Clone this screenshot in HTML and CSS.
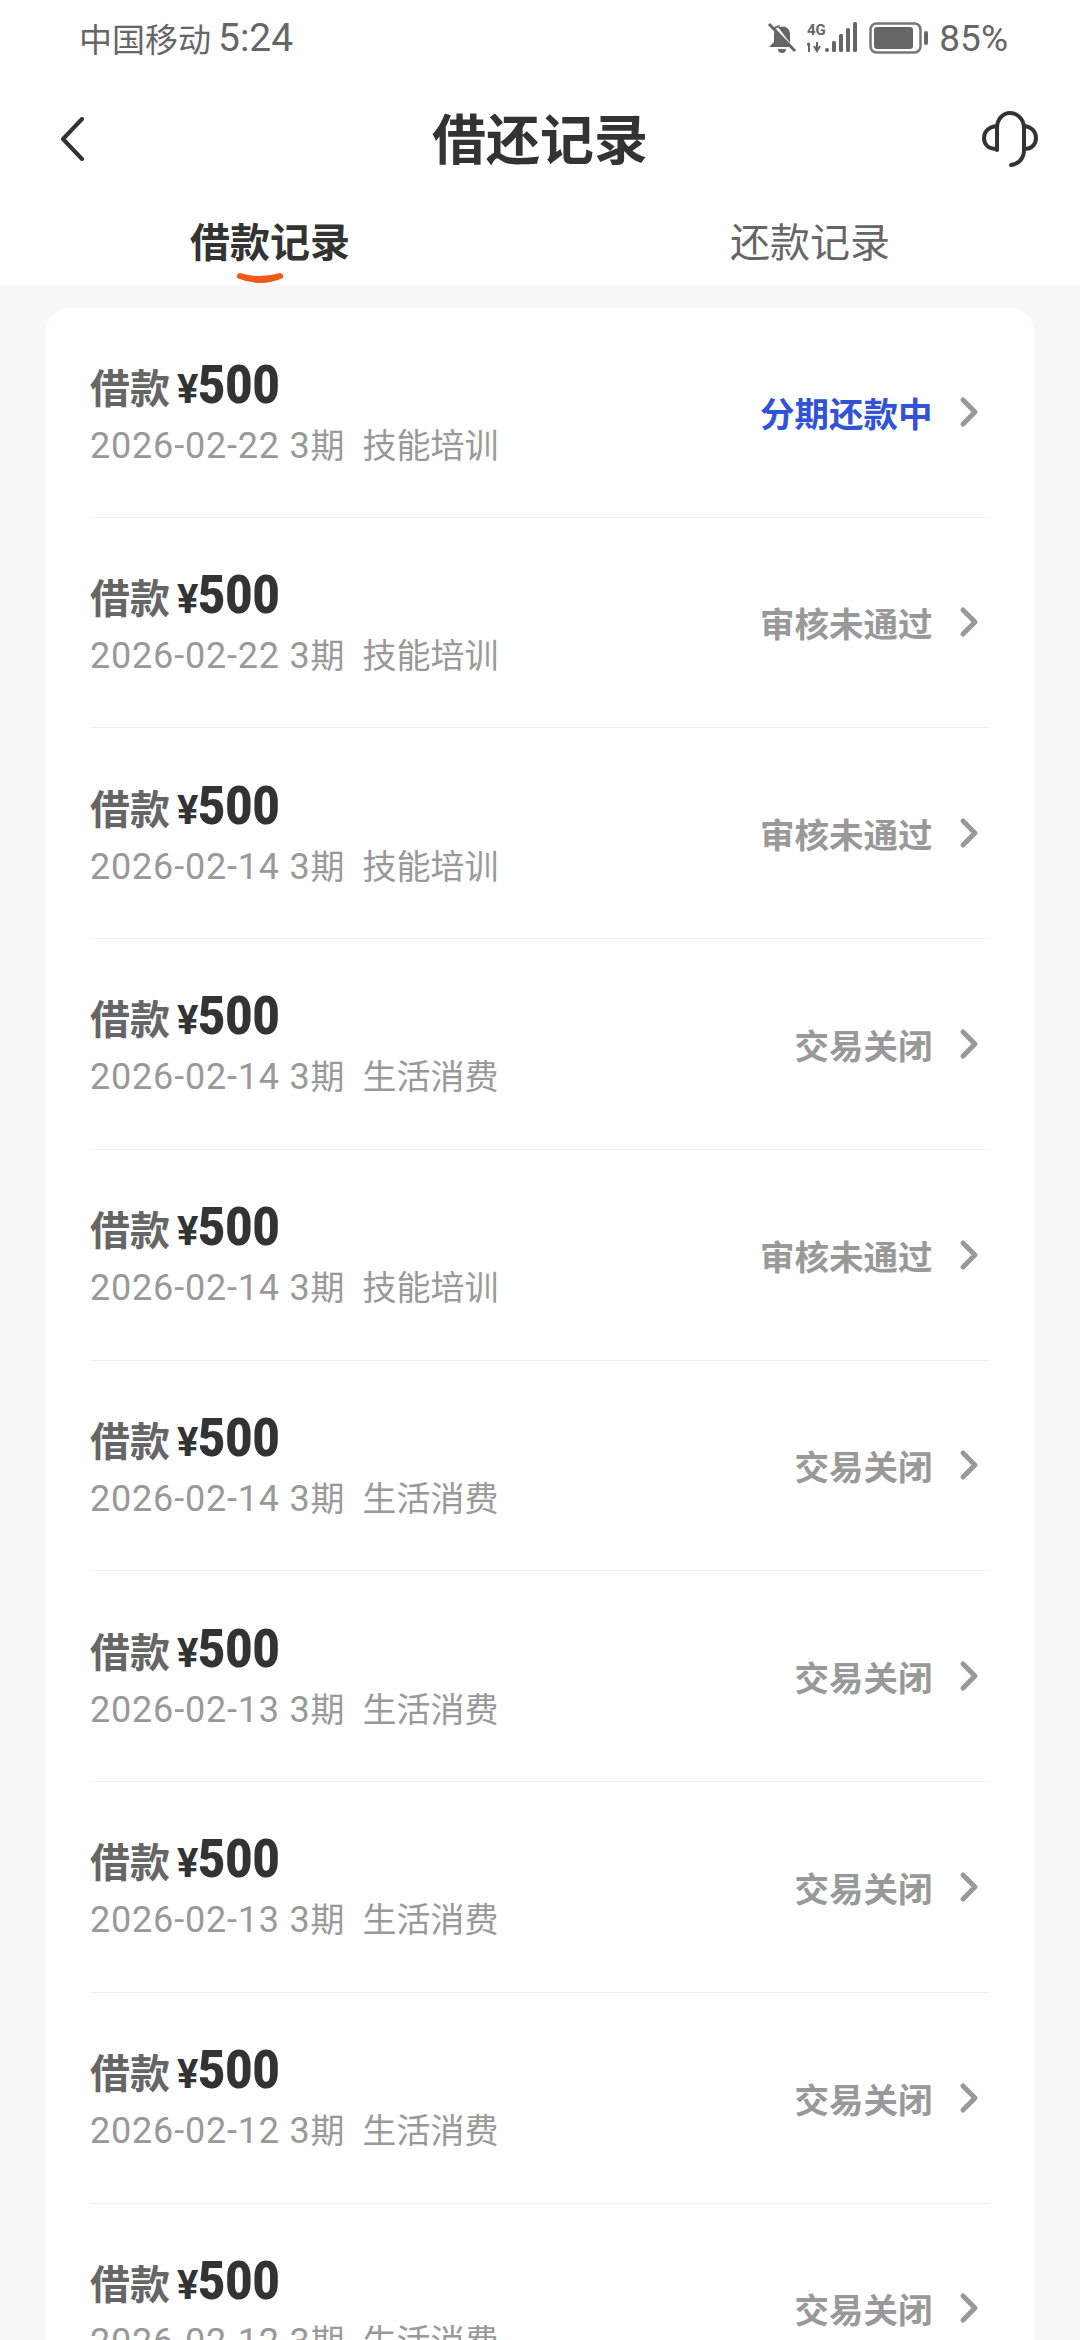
FILE: index.html
```html
<!DOCTYPE html>
<html lang="zh-CN">
<head>
    <meta charset="UTF-8">
    <meta name="viewport" content="width=device-width, initial-scale=1.0">
    <title>借还记录</title>
    <link rel="stylesheet" href="styles.css">
</head>
<body>
    <div class="top">
        <div class="status-bar">
            <div class="status-left"><span>中国移动</span><span class="clock">5:24</span></div>
            <div class="status-right">
                <!-- muted bell -->
                <svg class="icon-bell" width="30" height="34" viewBox="0 0 30 34">
                    <path d="M15 3c-1.500 0-2.500 1-2.500 2.500C8.500 7 7 10 7 14v7l-5 5h21L7 6" fill="#666"/>
                    <path d="M23 22v-8c0-4-1.500-7-5.500-8.500L11 6z" fill="#666"/>
                    <path d="M11 28h8c0 2.500-1.500 4-4 4s-4-1.500-4-4z" fill="#666"/>
                    <path d="M2 3l26 27" stroke="#666" stroke-width="3" fill="none"/>
                </svg>
                <svg class="icon-signal" width="50" height="34" viewBox="0 0 50 34">
                    <text x="0" y="14" class="net-label">4G</text>
                    <path d="M2 22l-2 2M2 22v9M10 21v9M7 25l3 5 3-5" stroke="#666" stroke-width="2" fill="none"/>
                    <rect x="18" y="27" width="4" height="4" rx="2" fill="#666"/>
                    <rect x="25" y="20" width="4" height="11" rx="1.500" fill="#666"/>
                    <rect x="32" y="13" width="4" height="18" rx="1.500" fill="#666"/>
                    <rect x="39" y="7" width="4" height="24" rx="1.500" fill="#666"/>
                    <rect x="46" y="1" width="4" height="30" rx="1.500" fill="#666"/>
                </svg>
                <svg class="icon-battery" width="60" height="32" viewBox="0 0 60 32">
                    <rect x="1.500" y="1.500" width="50" height="29" rx="6" fill="none" stroke="#777" stroke-width="2.500"/>
                    <rect x="5" y="5" width="39" height="22" rx="3" fill="#666"/>
                    <rect x="55" y="9" width="4" height="14" rx="2" fill="#666"/>
                </svg>
                <span class="percent">85%</span>
            </div>
        </div>

        <div class="title-bar">
            <svg class="back" width="24" height="44" viewBox="0 0 24 44">
                <path d="M22 2L3 22l19 20" fill="none" stroke="#333" stroke-width="4" stroke-linecap="round" stroke-linejoin="round"/>
            </svg>
            <h1 class="page-title">借还记录</h1>
            <!-- headset -->
            <svg class="service" width="56" height="56" viewBox="0 0 56 56">
                <path d="M15 39V17C15 8 21 2 28 2s14 6 14 15v22c0 8-5 14-13 15" fill="none" stroke="#333" stroke-width="4" stroke-linecap="round"/>
                <path d="M15 15C6 16 2 21 2 27s4 11 13 11" fill="none" stroke="#333" stroke-width="4" stroke-linecap="round"/>
                <path d="M42 15c8 1 12 6 12 12s-4 11-12 11" fill="none" stroke="#333" stroke-width="4" stroke-linecap="round"/>
            </svg>
        </div>

        <div class="tabs">
            <div class="tab active">
                <span>借款记录</span>
                <svg class="tab-mark" width="48" height="13" viewBox="0 0 48 13">
                    <path d="M4 1q20 6 40 0q4 1 3 5q-23 10-46 0q-1-4 3-5z" fill="#f0591a"/>
                </svg>
            </div>
            <div class="tab">还款记录</div>
        </div>
    </div>

    <div class="card">
        <div class="row">
            <div class="row-main">
                <div class="row-title">借款 <em>¥</em><b>500</b></div>
                <div class="row-sub"><span class="date">2026-02-22 3</span>期<span class="purpose">技能培训</span></div>
            </div>
            <div class="row-state blue">分期还款中</div>
            <svg class="chevron" width="20" height="32" viewBox="0 0 20 32"><path d="M4 4l12 12L4 28" /></svg>
        </div>
        <div class="row">
            <div class="row-main">
                <div class="row-title">借款 <em>¥</em><b>500</b></div>
                <div class="row-sub"><span class="date">2026-02-22 3</span>期<span class="purpose">技能培训</span></div>
            </div>
            <div class="row-state">审核未通过</div>
            <svg class="chevron" width="20" height="32" viewBox="0 0 20 32"><path d="M4 4l12 12L4 28" /></svg>
        </div>
        <div class="row">
            <div class="row-main">
                <div class="row-title">借款 <em>¥</em><b>500</b></div>
                <div class="row-sub"><span class="date">2026-02-14 3</span>期<span class="purpose">技能培训</span></div>
            </div>
            <div class="row-state">审核未通过</div>
            <svg class="chevron" width="20" height="32" viewBox="0 0 20 32"><path d="M4 4l12 12L4 28" /></svg>
        </div>
        <div class="row">
            <div class="row-main">
                <div class="row-title">借款 <em>¥</em><b>500</b></div>
                <div class="row-sub"><span class="date">2026-02-14 3</span>期<span class="purpose">生活消费</span></div>
            </div>
            <div class="row-state">交易关闭</div>
            <svg class="chevron" width="20" height="32" viewBox="0 0 20 32"><path d="M4 4l12 12L4 28" /></svg>
        </div>
        <div class="row">
            <div class="row-main">
                <div class="row-title">借款 <em>¥</em><b>500</b></div>
                <div class="row-sub"><span class="date">2026-02-14 3</span>期<span class="purpose">技能培训</span></div>
            </div>
            <div class="row-state">审核未通过</div>
            <svg class="chevron" width="20" height="32" viewBox="0 0 20 32"><path d="M4 4l12 12L4 28" /></svg>
        </div>
        <div class="row">
            <div class="row-main">
                <div class="row-title">借款 <em>¥</em><b>500</b></div>
                <div class="row-sub"><span class="date">2026-02-14 3</span>期<span class="purpose">生活消费</span></div>
            </div>
            <div class="row-state">交易关闭</div>
            <svg class="chevron" width="20" height="32" viewBox="0 0 20 32"><path d="M4 4l12 12L4 28" /></svg>
        </div>
        <div class="row">
            <div class="row-main">
                <div class="row-title">借款 <em>¥</em><b>500</b></div>
                <div class="row-sub"><span class="date">2026-02-13 3</span>期<span class="purpose">生活消费</span></div>
            </div>
            <div class="row-state">交易关闭</div>
            <svg class="chevron" width="20" height="32" viewBox="0 0 20 32"><path d="M4 4l12 12L4 28" /></svg>
        </div>
        <div class="row">
            <div class="row-main">
                <div class="row-title">借款 <em>¥</em><b>500</b></div>
                <div class="row-sub"><span class="date">2026-02-13 3</span>期<span class="purpose">生活消费</span></div>
            </div>
            <div class="row-state">交易关闭</div>
            <svg class="chevron" width="20" height="32" viewBox="0 0 20 32"><path d="M4 4l12 12L4 28" /></svg>
        </div>
        <div class="row">
            <div class="row-main">
                <div class="row-title">借款 <em>¥</em><b>500</b></div>
                <div class="row-sub"><span class="date">2026-02-12 3</span>期<span class="purpose">生活消费</span></div>
            </div>
            <div class="row-state">交易关闭</div>
            <svg class="chevron" width="20" height="32" viewBox="0 0 20 32"><path d="M4 4l12 12L4 28" /></svg>
        </div>
        <div class="row">
            <div class="row-main">
                <div class="row-title">借款 <em>¥</em><b>500</b></div>
                <div class="row-sub"><span class="date">2026-02-12 3</span>期<span class="purpose">生活消费</span></div>
            </div>
            <div class="row-state">交易关闭</div>
            <svg class="chevron" width="20" height="32" viewBox="0 0 20 32"><path d="M4 4l12 12L4 28" /></svg>
        </div>
    </div>
</body>
</html>
```

FILE: styles.css
```css
html, body {
    height: 2340px;
    overflow: hidden;
}

body {
    margin: 0;
    background-color: #f8f8f8;
    font-family: Roboto, "Noto Sans CJK SC", sans-serif;
}

.top {
    background-color: #ffffff;
    height: 285px;
}

.status-bar {
    display: flex;
    justify-content: space-between;
    align-items: center;
    height: 76px;
    padding: 0 72px 0 79px;
    color: #666;
    font-size: 34px;
}

.status-left {
    display: flex;
    align-items: center;
    gap: 7px;
    font-size: 33px;
}

.clock {
    font-size: 39px;
    line-height: 44px;
}

.status-right {
    display: flex;
    align-items: center;
}

.icon-signal {
    margin-left: 10px;
}

.icon-battery {
    margin-left: 12px;
}

.percent {
    margin-left: 10px;
    font-size: 37px;
}

.net-label {
    font-family: Roboto, sans-serif;
    font-size: 15px;
    font-weight: 700;
    fill: #666;
}

.title-bar {
    display: grid;
    grid-template-columns: 1fr auto 1fr;
    align-items: center;
    box-sizing: border-box;
    height: 130px;
    padding: 0 42px 10px;
}

.back {
    margin: 5px 0 0 18px;
}

.service {
    justify-self: end;
    margin-top: 6px;
}

.page-title {
    margin: 0;
    font-size: 54px;
    font-weight: 700;
    color: #333;
}

.tabs {
    display: grid;
    grid-template-columns: 1fr 1fr;
    height: 79px;
    font-size: 40px;
    color: #666;
}

.tab {
    position: relative;
    display: flex;
    justify-content: center;
    align-items: center;
    height: 68px;
}

.tab.active {
    font-weight: 700;
    color: #333;
}

.tab-mark {
    position: absolute;
    left: 236px;
    top: 66px;
}

.card {
    margin: 23px 46px 0;
    padding: 0 44px;
    background-color: #ffffff;
    border-radius: 24px 24px 0 0;
}

.row {
    display: flex;
    align-items: center;
    box-sizing: border-box;
    height: 210.75px;
    border-bottom: 1px solid #eeeeee;
}

.row:first-child {
    height: 209.500px;
}

.row-main {
    flex: 1;
}

.row-title {
    display: flex;
    align-items: baseline;
    height: 60px;
    font-size: 40px;
    font-weight: 700;
    color: #666;
}

.row-title em {
    margin-left: 7px;
    font-style: normal;
    font-size: 40px;
    color: #333;
}

/* the amount uses a narrower figure than Roboto has */
.row-title b {
    display: inline-block;
    font-size: 54px;
    line-height: 50px;
    color: #333;
    transform: scaleX(0.87);
    transform-origin: left;
}

.row-sub {
    margin-top: 2px;
    font-size: 34px;
    color: #999;
    white-space: nowrap;
}

.date {
    font-size: 36px;
    letter-spacing: 0.8px;
}

.purpose {
    margin-left: 18px;
}

.row-state {
    font-size: 34.500px;
    font-weight: 700;
    color: #999;
}

.row-state.blue {
    color: #3353d6;
}

.chevron {
    margin: 0 11px 0 26.500px;
}

.chevron path {
    fill: none;
    stroke: #999;
    stroke-width: 5;
    stroke-linecap: round;
    stroke-linejoin: round;
}
```
